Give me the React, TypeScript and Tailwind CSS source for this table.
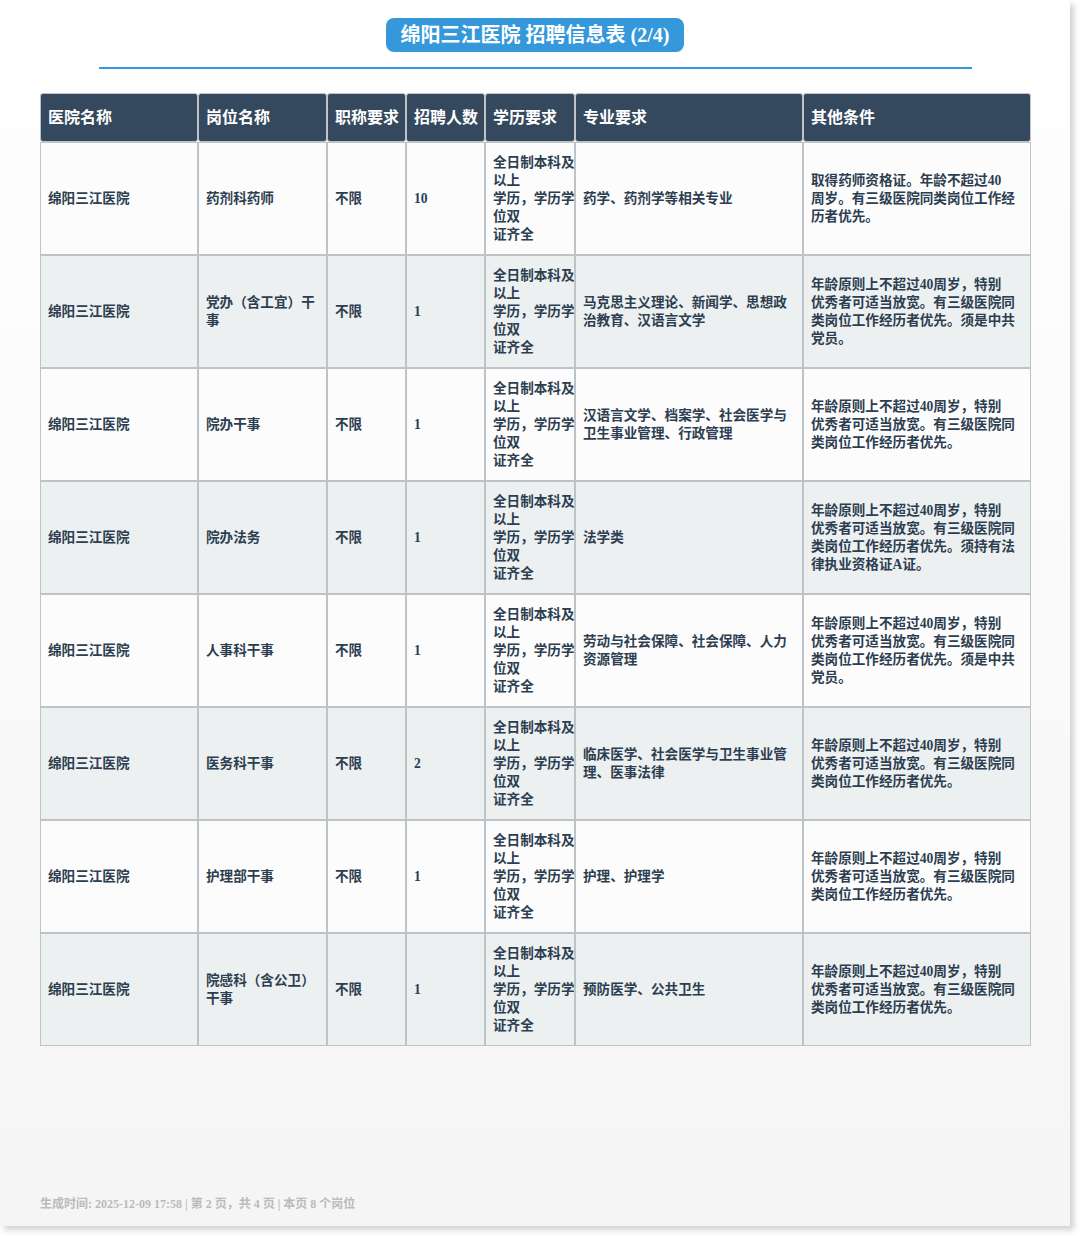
import React from "react";

const EDU = ["全日制本科及", "以上", "学历，学历学", "位双", "证齐全"];
const STD = ["年龄原则上不超过40周岁，特别", "优秀者可适当放宽。有三级医院同", "类岗位工作经历者优先。"];

type Row = {
  pos: string[];
  num: string;
  major: string[];
  other: string[];
};

const rows: Row[] = [
  {
    pos: ["药剂科药师"],
    num: "10",
    major: ["药学、药剂学等相关专业"],
    other: ["取得药师资格证。年龄不超过40", "周岁。有三级医院同类岗位工作经", "历者优先。"],
  },
  {
    pos: ["党办（含工宜）干", "事"],
    num: "1",
    major: ["马克思主义理论、新闻学、思想政", "治教育、汉语言文学"],
    other: ["年龄原则上不超过40周岁，特别", "优秀者可适当放宽。有三级医院同", "类岗位工作经历者优先。须是中共", "党员。"],
  },
  {
    pos: ["院办干事"],
    num: "1",
    major: ["汉语言文学、档案学、社会医学与", "卫生事业管理、行政管理"],
    other: STD,
  },
  {
    pos: ["院办法务"],
    num: "1",
    major: ["法学类"],
    other: ["年龄原则上不超过40周岁，特别", "优秀者可适当放宽。有三级医院同", "类岗位工作经历者优先。须持有法", "律执业资格证A证。"],
  },
  {
    pos: ["人事科干事"],
    num: "1",
    major: ["劳动与社会保障、社会保障、人力", "资源管理"],
    other: ["年龄原则上不超过40周岁，特别", "优秀者可适当放宽。有三级医院同", "类岗位工作经历者优先。须是中共", "党员。"],
  },
  {
    pos: ["医务科干事"],
    num: "2",
    major: ["临床医学、社会医学与卫生事业管", "理、医事法律"],
    other: STD,
  },
  {
    pos: ["护理部干事"],
    num: "1",
    major: ["护理、护理学"],
    other: STD,
  },
  {
    pos: ["院感科（含公卫）", "干事"],
    num: "1",
    major: ["预防医学、公共卫生"],
    other: STD,
  },
];

const headers = ["医院名称", "岗位名称", "职称要求", "招聘人数", "学历要求", "专业要求", "其他条件"];

function Cell({ lines, bg }: { lines: string[]; bg: string }) {
  return (
    <div
      className={`flex items-center border border-[#bdc3c7] pl-[7px] pr-0 h-[113px] overflow-hidden ${bg}`}
    >
      <div className="flex flex-col text-[13.6px] leading-[18px] text-[#2c3e50] font-semibold">
        {lines.map((l, i) => (
          <span key={i} className="whitespace-nowrap">
            {l}
          </span>
        ))}
      </div>
    </div>
  );
}

export default function App() {
  return (
    <div
      className="w-[1080px] h-[1236px] bg-white"
      style={{ fontFamily: '"Liberation Serif", "Noto Sans CJK SC", serif' }}
    >
      <div className="w-[1070px] h-[1226px] bg-gradient-to-b from-white to-[#f5f5f5] shadow-[4px_4px_6px_rgba(0,0,0,0.18)] flex flex-col px-[40px] pt-[18px] pb-[14px]">
        <div className="flex justify-center">
          <div className="h-[34px] px-[15px] rounded-[8px] bg-[#3498db] flex items-center text-white text-[20px] font-bold whitespace-nowrap">
            绵阳三江医院 招聘信息表 (2/4)
          </div>
        </div>
        <div className="mx-auto mt-[15px] w-[873px] h-[2px] bg-[#3498db]" />
        <div className="mt-[24px] grid grid-cols-[158px_129px_79px_79px_90px_228px_228px] w-[991px]">
          {headers.map((h) => (
            <div
              key={h}
              className="h-[49px] flex items-center pl-[7px] bg-[#34495e] border border-[#bdc3c7] rounded-[3px] text-white text-[16px] font-bold whitespace-nowrap"
            >
              {h}
            </div>
          ))}
          {rows.map((r, i) => {
            const bg = i % 2 === 0 ? "bg-[#fcfcfc]" : "bg-[#ecf0f1]";
            return (
              <React.Fragment key={i}>
                <Cell lines={["绵阳三江医院"]} bg={bg} />
                <Cell lines={r.pos} bg={bg} />
                <Cell lines={["不限"]} bg={bg} />
                <Cell lines={[r.num]} bg={bg} />
                <Cell lines={EDU} bg={bg} />
                <Cell lines={r.major} bg={bg} />
                <Cell lines={r.other} bg={bg} />
              </React.Fragment>
            );
          })}
        </div>
        <div className="mt-auto text-[12px] leading-[16px] text-[#bbbbbb] font-semibold whitespace-nowrap">
          生成时间: 2025-12-09 17:58 | 第 2 页，共 4 页 | 本页 8 个岗位
        </div>
      </div>
    </div>
  );
}
